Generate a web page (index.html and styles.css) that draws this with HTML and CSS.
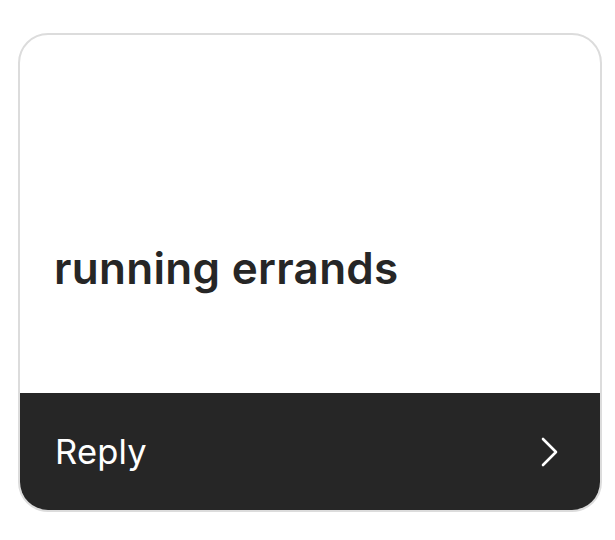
FILE: index.html
```html
<!DOCTYPE html>
<html>
<head>
<meta charset="utf-8">
<link rel="stylesheet" href="styles.css">
</head>
<body>
<div class="card">
  <div class="body">
    <div class="title">running errands</div>
  </div>
  <div class="footer">
    <span class="reply">Reply</span>
    <svg class="chev" width="20" height="32" viewBox="0 0 20 32">
      <path d="M3 3 L16 16 L3 29" fill="none" stroke="#fff" stroke-width="2.6" stroke-linecap="round" stroke-linejoin="round"/>
    </svg>
  </div>
</div>
</body>
</html>
```
FILE: styles.css
```css
html, body {
  margin: 0;
  padding: 0;
  background: #fff;
}
body {
  padding: 33px 13px 0 18px;
  font-family: Inter, "Noto Sans", sans-serif;
}
.card {
  width: 580px;
  height: 475px;
  border: 2px solid #dcdcdc;
  border-radius: 30px;
  overflow: hidden;
  display: flex;
  flex-direction: column;
}
.body {
  flex: 1;
  display: flex;
  align-items: center;
  padding: 0 34px;
  padding-top: 108px;
}
.title {
  font-size: 44px;
  font-weight: 600;
  color: #262626;
  letter-spacing: 0.3px;
}
.footer {
  height: 117px;
  background: #262626;
  display: flex;
  align-items: center;
  justify-content: space-between;
  padding: 0 40px 0 35px;
}
.reply {
  color: #fff;
  font-size: 34.5px;
  font-weight: 400;
  letter-spacing: 0.2px;
}
.chev {
  display: block;
}
```
